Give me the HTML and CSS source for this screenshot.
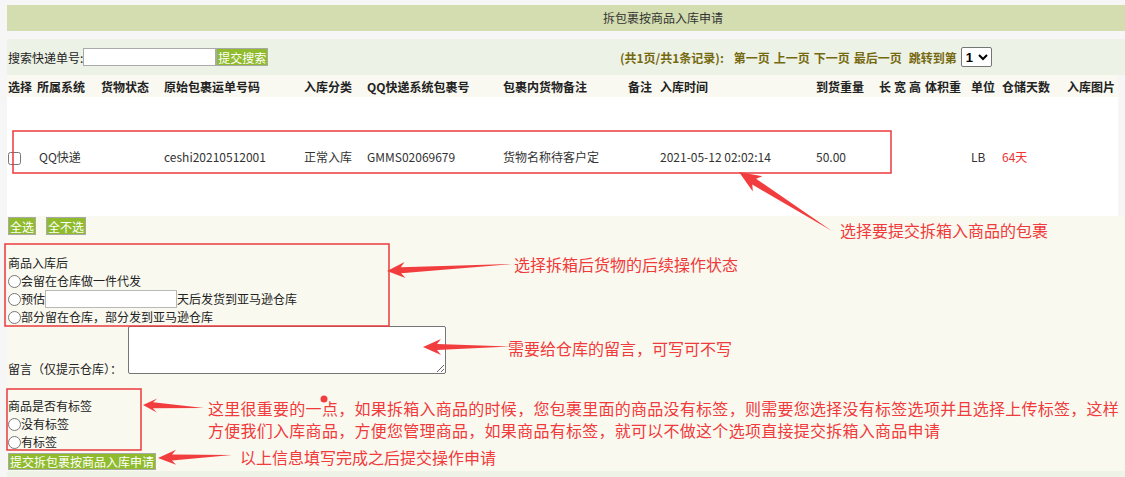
FILE: index.html
```html
<!DOCTYPE html>
<html lang="zh-CN">
<head>
  <meta charset="UTF-8">
  <title>拆包裹按商品入库申请</title>
  <link rel="stylesheet" href="styles.css">
</head>
<body>
  <div class="page">
    <!-- 标题 -->
    <div class="title">拆包裹按商品入库申请</div>

    <!-- 搜索 + 分页 -->
    <div class="search-bar">
      <div class="search">
        <span>搜索快递单号:</span><input type="text" class="search-input"><button class="btn">提交搜索</button>
      </div>
      <div class="pager">
        <span class="total">(共1页/共1条记录):</span>
        <a>第一页</a><a>上一页</a><a>下一页</a><a>最后一页</a>
        <span class="jump">跳转到第</span>
        <select class="page-select"><option>1</option></select>
      </div>
    </div>

    <!-- 包裹列表 -->
    <table class="list">
      <colgroup>
        <col class="w29"><col class="w64"><col class="w63"><col class="w140"><col class="w63">
        <col class="w136"><col class="w125"><col class="w32"><col class="w156"><col class="w63">
        <col class="w15"><col class="w15"><col class="w16"><col class="w46"><col class="w31">
        <col class="w65"><col class="w52">
      </colgroup>
      <thead>
        <tr>
          <th>选择</th><th>所属系统</th><th>货物状态</th><th>原始包裹运单号码</th><th>入库分类</th>
          <th>QQ快递系统包裹号</th><th>包裹内货物备注</th><th>备注</th><th>入库时间</th><th>到货重量</th>
          <th>长</th><th>宽</th><th>高</th><th>体积重</th><th>单位</th><th>仓储天数</th><th>入库图片</th>
        </tr>
      </thead>
      <tbody>
        <tr>
          <td><input type="checkbox" class="chk"></td>
          <td class="sys">QQ快递</td>
          <td></td>
          <td>ceshi20210512001</td>
          <td>正常入库</td>
          <td>GMMS02069679</td>
          <td>货物名称待客户定</td>
          <td></td>
          <td>2021-05-12 02:02:14</td>
          <td>50.00</td>
          <td></td><td></td><td></td><td></td>
          <td>LB</td>
          <td class="days-red">64天</td>
          <td></td>
        </tr>
      </tbody>
    </table>

    <!-- 申请表单 -->
    <div class="form">
      <div class="ops">
        <button class="btn">全选</button>
        <button class="btn">全不选</button>
      </div>

      <div class="group after">
        <div class="group-title">商品入库后</div>
        <label class="opt"><input type="radio" name="after">会留在仓库做一件代发</label>
        <label class="opt"><input type="radio" name="after">预估<input type="text" class="days">天后发货到亚马逊仓库</label>
        <label class="opt"><input type="radio" name="after">部分留在仓库，部分发到亚马逊仓库</label>
      </div>

      <div class="msg">
        <span class="msg-label">留言（仅提示仓库）：</span>
        <textarea class="msg-box"></textarea>
      </div>

      <div class="group tag">
        <div class="group-title">商品是否有标签</div>
        <label class="opt"><input type="radio" name="tag">没有标签</label>
        <label class="opt"><input type="radio" name="tag">有标签</label>
      </div>

      <button class="btn submit">提交拆包裹按商品入库申请</button>
    </div>
    <div class="foot"></div>
  </div>

  <!-- 标注层 -->
  <div class="notes">
    <svg class="marks" width="1125" height="477" viewBox="0 0 1125 477">
      <g fill="none" stroke="#ea3a3c" stroke-width="1.5">
        <rect x="13" y="131" width="878" height="42"/>
        <rect x="5" y="244" width="384" height="82"/>
        <rect x="7" y="389" width="134" height="61"/>
      </g>
      <g fill="#f23d3e">
        <polygon points="832,231 756.1,178.7 762.4,176.2 739,172 752.8,191.4 752.3,184.6"/>
        <polygon points="512,264 400.8,267.2 404.5,262 387,271 405.4,278 401.2,273.2"/>
        <polygon points="512,346.5 437,344 441,339 423,347 441,355 437,350"/>
        <polygon points="204,408 153.1,402.3 157.2,398.5 143,405 156.8,412.5 152.9,408.3"/>
        <polygon points="232,455 172,454.4 176,449.8 158,458 176,464.8 172,460.4"/>
        <circle cx="324" cy="399" r="3.5"/>
      </g>
    </svg>
    <span class="note n1">选择要提交拆箱入商品的包裹</span>
    <span class="note n2">选择拆箱后货物的后续操作状态</span>
    <span class="note n3">需要给仓库的留言，可写可不写</span>
    <span class="note n4">这里很重要的一点，如果拆箱入商品的时候，您包裹里面的商品没有标签，则需要您选择没有标签选项并且选择上传标签，这样<br>方便我们入库商品，方便您管理商品，如果商品有标签，就可以不做这个选项直接提交拆箱入商品申请</span>
    <span class="note n5">以上信息填写完成之后提交操作申请</span>
  </div>
</body>
</html>
```

FILE: styles.css
```css
body {
  margin: 0;
  background: #f6f6f6;
  font-family: "Noto Sans CJK SC", "Liberation Sans", sans-serif;
  font-size: 12px;
  color: #222;
  position: relative;
  height: 477px;
  overflow: hidden;
}

.page {
  margin: 5px 0 0 7px;
}

.title {
  height: 26px;
  line-height: 26px;
  background: #d3ddb0;
  padding-left: 596px;
  color: #333;
}

/* 搜索栏 */
.search-bar {
  margin-top: 8px;
  height: 36px;
  background: #edf2e7;
  display: flex;
  align-items: center;
}

.search {
  width: 612px;
  padding-left: 1px;
  display: flex;
  align-items: center;
}

.search-input {
  width: 133px;
  height: 18px;
  box-sizing: border-box;
  margin: 0;
  border: 1px solid #aaa;
  background: #fff;
}

.btn {
  height: 18px;
  box-sizing: border-box;
  margin: 0;
  padding: 0 1px;
  border: 1px solid #a9a9a9;
  background: #8fbb2c;
  color: #fff;
  font-family: inherit;
  font-size: 12px;
  line-height: 15px;
  cursor: pointer;
}

.pager {
  display: flex;
  align-items: center;
  gap: 4px;
  color: #75690f;
  font-weight: bold;
}

.total {
  margin-right: 6px;
}

.jump {
  margin-left: 3px;
}

.page-select {
  width: 31px;
  height: 20px;
  margin: 0;
  font-size: 13px;
  font-weight: bold;
  border: 1px solid #767676;
  border-radius: 2px;
  background: #fff;
}

/* 列表 */
.list {
  width: 1111px;
  table-layout: fixed;
  border-collapse: collapse;
}

.list th,
.list td {
  padding: 0 0 0 1px;
  text-align: left;
  white-space: nowrap;
  overflow: hidden;
}

.list thead tr {
  height: 22px;
  background: #f9f9f1;
}

.list th {
  font-weight: bold;
}

.list tbody tr {
  height: 119px;
  background: #fff;
}

.list td {
  vertical-align: middle;
  color: #333;
}

.list .sys {
  padding-left: 3px;
}

.list .days-red {
  color: #ef3434;
}

.chk {
  margin: 0;
  width: 13px;
  height: 13px;
  vertical-align: middle;
}

.w15 { width: 15px; }
.w16 { width: 16px; }
.w29 { width: 29px; }
.w31 { width: 31px; }
.w32 { width: 32px; }
.w46 { width: 46px; }
.w52 { width: 52px; }
.w63 { width: 63px; }
.w64 { width: 64px; }
.w65 { width: 65px; }
.w125 { width: 125px; }
.w136 { width: 136px; }
.w140 { width: 140px; }
.w156 { width: 156px; }

/* 表单 */
.form {
  background: #f9f9f0;
  padding: 1px 0 0 1px;
  line-height: 18px;
}

.ops {
  display: flex;
  gap: 10px;
}

.group {
  display: flex;
  flex-direction: column;
}

.after {
  margin-top: 19px;
}

.tag {
  margin-top: 23px;
}

.group-title,
.opt {
  height: 18px;
}

.opt {
  display: flex;
  align-items: center;
}

.opt input[type="radio"] {
  margin: 0;
  width: 13px;
  height: 13px;
}

.days {
  width: 132px;
  height: 18px;
  box-sizing: border-box;
  margin: 0;
  border: 1px solid #b8b8b8;
  background: #fff;
}

.msg {
  display: flex;
  align-items: flex-end;
}

.msg-label {
  flex: none;
  width: 120px;
  margin-bottom: -4px;
}

.msg-box {
  flex: none;
  width: 318px;
  min-width: 318px;
  height: 48px;
  box-sizing: border-box;
  margin: 0;
  border: 1px solid #767676;
  border-radius: 2px;
  background: #fff;
}

.submit {
  margin-top: 2px;
  height: 17px;
}

.foot {
  height: 20px;
  background: #eef3e8;
}

/* 标注 */
.notes {
  position: absolute;
  left: 0;
  top: 0;
  width: 1125px;
  height: 477px;
  pointer-events: none;
}

.marks {
  position: absolute;
  left: 0;
  top: 0;
}

.note {
  position: absolute;
  font-size: 16px;
  line-height: 22px;
  color: #f03a3c;
  white-space: nowrap;
}

.n1 { left: 840px; top: 219px; }
.n2 { left: 514px; top: 253px; }
.n3 { left: 508px; top: 337px; }
.n4 { left: 208px; top: 397px; letter-spacing: 0.27px; }
.n5 { left: 240px; top: 446px; }
```
